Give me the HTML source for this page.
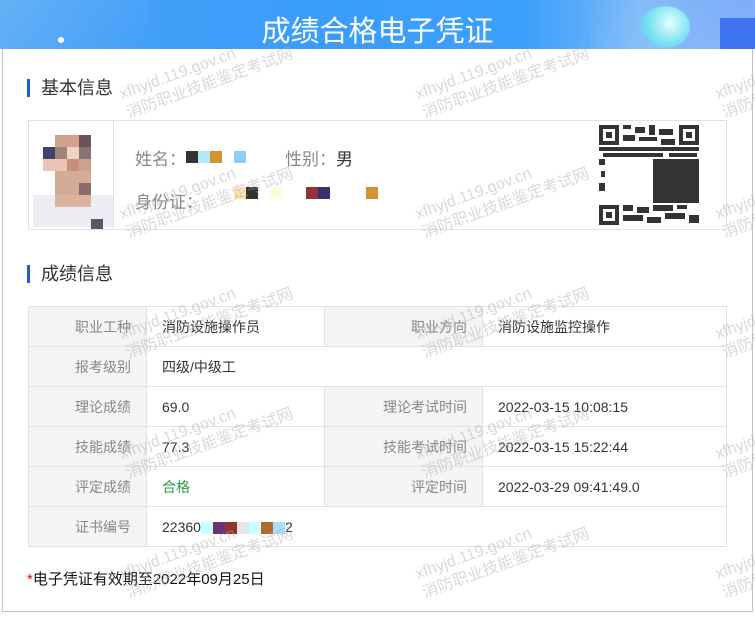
<!DOCTYPE html>
<html><head><meta charset="utf-8"><style>
*{margin:0;padding:0;box-sizing:border-box}
body{width:755px;height:620px;background:#fff;font-family:"Liberation Sans","Noto Sans CJK SC",sans-serif;position:relative;overflow:hidden;color:#333}
.hdr{position:absolute;left:0;top:0;width:755px;height:49px;background:linear-gradient(90deg,#4aa3f5 0%,#3a9cfb 40%,#3da0fb 70%,#7ab8f7 85%,#4a8cf5 100%);overflow:hidden}
.hdr h1{position:absolute;left:0;right:0;top:8px;text-align:center;color:#fff;font-size:29px;font-weight:normal;letter-spacing:0px}
.frame{position:absolute;left:2px;top:49px;width:751px;height:563px;border:1px solid #b7c6dc;border-top:none}
.sec{position:absolute;left:27px;font-size:18px;color:#333;padding-left:11px;border-left:3px solid #1e5fc8;line-height:18px}
.info{position:absolute;left:28px;top:120px;width:699px;height:110px;border:1px solid #e2e2e2}
.photo{position:absolute;left:0;top:0;width:85px;height:108px;border-right:1px solid #e2e2e2}
.px{position:absolute;width:12px;height:12px}
.lbl{position:absolute;font-size:17px;color:#888}
table{position:absolute;left:28px;top:306px;width:699px;border-collapse:collapse;font-size:14px}
td{border:1px solid #e2e2e2;height:40px;padding:0 15px}
td.l{background:#f4f4f4;color:#888;text-align:right}
td.v{color:#333}
.wm{position:absolute;color:rgba(170,170,170,0.45);font-size:16px;line-height:20px;transform:rotate(-20deg);transform-origin:left top;white-space:nowrap;pointer-events:none}
.wm span{display:block}
</style></head><body>
<div class="hdr">
<div style="position:absolute;left:0;top:0;width:150px;height:49px;background:linear-gradient(135deg,rgba(255,255,255,.15),rgba(255,255,255,0))"></div>
<div style="position:absolute;left:58px;top:37px;width:6px;height:6px;border-radius:50%;background:#fff"></div>
<div style="position:absolute;left:590px;top:0;width:165px;height:49px;background:linear-gradient(120deg,rgba(255,255,255,0),rgba(200,220,255,.5))"></div>
<div style="position:absolute;left:640px;top:6px;width:50px;height:42px;border-radius:50%;background:radial-gradient(circle at 60% 40%,#e8ffff,#7fe3f0 50%,#5ab9f5)"></div>
<div style="position:absolute;left:720px;top:18px;width:35px;height:31px;background:#3f73f0"></div>
<h1>成绩合格电子凭证</h1>
</div>
<div class="frame"></div>
<div class="sec" style="top:79px">基本信息</div>
<div class="info">
<div class="photo">
<div class="px" style="left:26px;top:14px;width:24px;background:#d3a08d"></div>
<div class="px" style="left:50px;top:14px;background:#6a5458"></div>
<div class="px" style="left:14px;top:26px;background:#3c4468"></div>
<div class="px" style="left:26px;top:26px;background:#9e8479"></div>
<div class="px" style="left:38px;top:26px;background:#f0d3c4"></div>
<div class="px" style="left:50px;top:26px;background:#857470"></div>
<div class="px" style="left:14px;top:38px;width:24px;background:#eac4b6"></div>
<div class="px" style="left:38px;top:38px;background:#c8907a"></div>
<div class="px" style="left:50px;top:38px;background:#cfa08a"></div>
<div class="px" style="left:26px;top:50px;width:36px;height:24px;background:#d4ab96"></div>
<div class="px" style="left:50px;top:62px;background:#8a6a6a"></div>
<div class="px" style="left:4px;top:74px;width:80px;height:32px;background:#eeedf3"></div>
<div class="px" style="left:26px;top:74px;width:36px;background:#dcb39c"></div>
<div class="px" style="left:62px;top:98px;background:#4d5b6a;height:10px"></div>
</div>
<div class="lbl" style="left:106px;top:24px">姓名：</div>
<div class="px" style="left:157px;top:30px;background:#333"></div>
<div class="px" style="left:169px;top:30px;background:#b0e8fa"></div>
<div class="px" style="left:181px;top:30px;background:#d49233"></div>
<div class="px" style="left:205px;top:30px;background:#8ecdfc"></div>
<div class="lbl" style="left:256px;top:24px">性别：<span style="color:#333">男</span></div>
<div class="lbl" style="left:106px;top:67px">身份证：</div>
<div class="px" style="left:205px;top:66px;background:#fde6b0"></div>
<div class="px" style="left:217px;top:66px;background:#333"></div>
<div class="px" style="left:241px;top:66px;background:#fffcd8"></div>
<div class="px" style="left:277px;top:66px;background:#933434"></div>
<div class="px" style="left:289px;top:66px;background:#36336d"></div>
<div class="px" style="left:337px;top:66px;background:#d49233"></div>
<svg style="position:absolute;left:570px;top:4px" width="100" height="100" viewBox="0 0 100 100">
<rect x="0" y="0" width="20" height="20" fill="#333"/><rect x="4" y="4" width="12" height="12" fill="#fff"/><rect x="7" y="7" width="6" height="6" fill="#333"/>
<rect x="80" y="0" width="20" height="20" fill="#333"/><rect x="84" y="4" width="12" height="12" fill="#fff"/><rect x="87" y="7" width="6" height="6" fill="#333"/>
<rect x="0" y="80" width="20" height="20" fill="#333"/><rect x="4" y="84" width="12" height="12" fill="#fff"/><rect x="7" y="87" width="6" height="6" fill="#333"/>
<g fill="#333"><rect x="24" y="0" width="8" height="4"/><rect x="36" y="2" width="10" height="6"/><rect x="50" y="0" width="6" height="10"/><rect x="60" y="4" width="14" height="6"/><rect x="24" y="10" width="12" height="6"/><rect x="40" y="12" width="18" height="4"/><rect x="62" y="14" width="14" height="6"/><rect x="0" y="22" width="100" height="4"/><rect x="4" y="28" width="60" height="4"/><rect x="70" y="28" width="28" height="4"/><rect x="54" y="34" width="46" height="44"/><rect x="0" y="34" width="6" height="6"/><rect x="2" y="46" width="4" height="6"/><rect x="0" y="58" width="6" height="8"/><rect x="24" y="80" width="10" height="6"/><rect x="38" y="82" width="12" height="6"/><rect x="54" y="80" width="20" height="6"/><rect x="78" y="80" width="10" height="4"/><rect x="24" y="90" width="20" height="6"/><rect x="48" y="92" width="14" height="6"/><rect x="66" y="88" width="20" height="6"/><rect x="90" y="90" width="10" height="8"/></g>
</svg>
</div>
<div class="sec" style="top:265px">成绩信息</div>
<table>
<tr><td class="l" style="width:118px">职业工种</td><td class="v" style="width:178px">消防设施操作员</td><td class="l" style="width:158px">职业方向</td><td class="v">消防设施监控操作</td></tr>
<tr><td class="l">报考级别</td><td class="v" colspan="3">四级/中级工</td></tr>
<tr><td class="l">理论成绩</td><td class="v">69.0</td><td class="l">理论考试时间</td><td class="v">2022-03-15 10:08:15</td></tr>
<tr><td class="l">技能成绩</td><td class="v">77.3</td><td class="l">技能考试时间</td><td class="v">2022-03-15 15:22:44</td></tr>
<tr><td class="l">评定成绩</td><td class="v" style="color:#2a9a4a">合格</td><td class="l">评定时间</td><td class="v">2022-03-29 09:41:49.0</td></tr>
<tr><td class="l">证书编号</td><td class="v" colspan="3">22360<span style="display:inline-block;width:84px;height:12px;vertical-align:middle;background:linear-gradient(90deg,#cff 0 12px,#6e3470 12px 24px,#933434 24px 36px,#e6e6e6 36px 48px,#cff 48px 60px,#b06a30 60px 72px,#a9e0f7 72px)"></span>2</td></tr>
</table>
<div style="position:absolute;left:27px;top:568px;font-size:15px;color:#111"><span style="color:#e00">*</span>电子凭证有效期至2022年09月25日</div>
<div class="wm" style="left:117px;top:86px"><span>xfhyjd.119.gov.cn</span><span>消防职业技能鉴定考试网</span></div>
<div class="wm" style="left:413px;top:86px"><span>xfhyjd.119.gov.cn</span><span>消防职业技能鉴定考试网</span></div>
<div class="wm" style="left:713px;top:86px"><span>xfhyjd.119.gov.cn</span><span>消防职业技能鉴定考试网</span></div>
<div class="wm" style="left:117px;top:206px"><span>xfhyjd.119.gov.cn</span><span>消防职业技能鉴定考试网</span></div>
<div class="wm" style="left:413px;top:206px"><span>xfhyjd.119.gov.cn</span><span>消防职业技能鉴定考试网</span></div>
<div class="wm" style="left:713px;top:206px"><span>xfhyjd.119.gov.cn</span><span>消防职业技能鉴定考试网</span></div>
<div class="wm" style="left:117px;top:326px"><span>xfhyjd.119.gov.cn</span><span>消防职业技能鉴定考试网</span></div>
<div class="wm" style="left:413px;top:326px"><span>xfhyjd.119.gov.cn</span><span>消防职业技能鉴定考试网</span></div>
<div class="wm" style="left:713px;top:326px"><span>xfhyjd.119.gov.cn</span><span>消防职业技能鉴定考试网</span></div>
<div class="wm" style="left:117px;top:446px"><span>xfhyjd.119.gov.cn</span><span>消防职业技能鉴定考试网</span></div>
<div class="wm" style="left:413px;top:446px"><span>xfhyjd.119.gov.cn</span><span>消防职业技能鉴定考试网</span></div>
<div class="wm" style="left:713px;top:446px"><span>xfhyjd.119.gov.cn</span><span>消防职业技能鉴定考试网</span></div>
<div class="wm" style="left:117px;top:566px"><span>xfhyjd.119.gov.cn</span><span>消防职业技能鉴定考试网</span></div>
<div class="wm" style="left:413px;top:566px"><span>xfhyjd.119.gov.cn</span><span>消防职业技能鉴定考试网</span></div>
<div class="wm" style="left:713px;top:566px"><span>xfhyjd.119.gov.cn</span><span>消防职业技能鉴定考试网</span></div>
</body></html>
